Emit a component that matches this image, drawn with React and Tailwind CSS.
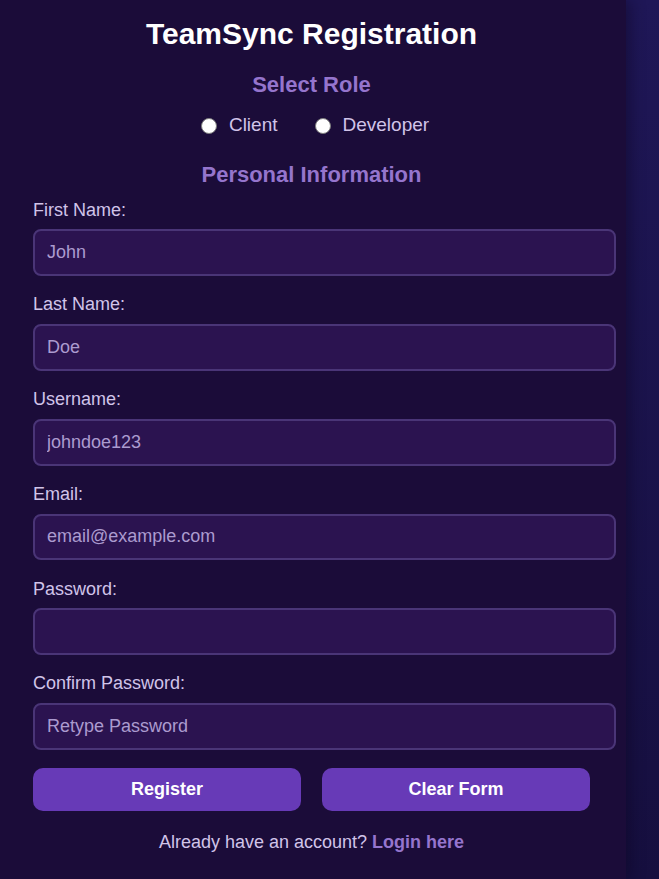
import { useState } from 'react';

const fields = [
  { id: 'firstName', label: 'First Name:', type: 'text', placeholder: 'John' },
  { id: 'lastName', label: 'Last Name:', type: 'text', placeholder: 'Doe' },
  { id: 'username', label: 'Username:', type: 'text', placeholder: 'johndoe123' },
  { id: 'email', label: 'Email:', type: 'email', placeholder: 'email@example.com' },
  { id: 'password', label: 'Password:', type: 'password', placeholder: '' },
  { id: 'confirmPassword', label: 'Confirm Password:', type: 'password', placeholder: 'Retype Password' },
];

const emptyForm = fields.reduce((acc, f) => ({ ...acc, [f.id]: '' }), { role: '' });

export default function App() {
  const [form, setForm] = useState(emptyForm);

  const handleChange = (e) => {
    setForm({ ...form, [e.target.name]: e.target.value });
  };

  const handleSubmit = (e) => {
    e.preventDefault();
  };

  return (
    <div
      className="min-h-screen flex bg-gradient-to-b from-[#1f1757] to-[#160f3f]"
      style={{ fontFamily: '"Liberation Sans", Arial, sans-serif' }}
    >
      <div className="w-[626px] min-h-screen bg-[#1b0c39] pl-[33px] pr-[36px] pt-[16px] shadow-[4px_0_14px_rgba(10,4,30,0.45)]">
        <h1 className="text-center text-[30px] leading-[36px] font-bold text-white">TeamSync Registration</h1>

        <form onSubmit={handleSubmit}>
          {/* Role */}
          <h2 className="mt-[20px] text-center text-[22px] leading-[26px] font-bold text-[#9575cd]">Select Role</h2>
          <div className="mt-[15px] h-[24px] flex justify-center items-center pl-[7px] text-[19px] leading-[24px] text-[#d1c4e9]">
            <label className="flex items-center">
              <input
                type="radio"
                name="role"
                value="client"
                checked={form.role === 'client'}
                onChange={handleChange}
                className="appearance-none w-4 h-4 mt-[2px] rounded-full bg-white border border-[#7d7d7d] checked:border-[5px] checked:border-[#9575cd]"
              />
              <span className="ml-[12px]">Client</span>
            </label>
            <label className="flex items-center ml-[38px]">
              <input
                type="radio"
                name="role"
                value="developer"
                checked={form.role === 'developer'}
                onChange={handleChange}
                className="appearance-none w-4 h-4 mt-[2px] rounded-full bg-white border border-[#7d7d7d] checked:border-[5px] checked:border-[#9575cd]"
              />
              <span className="ml-[11px]">Developer</span>
            </label>
          </div>

          {/* Personal info */}
          <h2 className="mt-[25px] text-center text-[22px] leading-[26px] font-bold text-[#9575cd]">Personal Information</h2>

          <div className="mt-[11.7px]">
            {fields.map((f) => (
              <div key={f.id} className="mb-[18.35px]">
                <label htmlFor={f.id} className="block text-[18px] leading-[20.7px] text-[#d1c4e9]">
                  {f.label}
                </label>
                <input
                  id={f.id}
                  name={f.id}
                  type={f.type}
                  value={form[f.id]}
                  onChange={handleChange}
                  placeholder={f.placeholder}
                  className="block mt-[9px] w-[583px] h-[46.7px] px-[12px] rounded-[8px] border-2 border-[#4a3577] bg-[#2b1350] text-[18px] text-[#d1c4e9] placeholder:text-[#ab9bcf] outline-none"
                />
              </div>
            ))}
          </div>

          <div className="flex justify-between -mt-[0.1px]">
            <button type="submit" className="w-[268px] h-[42.7px] rounded-[10px] bg-[#673ab7] text-white text-[18px] font-bold">
              Register
            </button>
            <button
              type="button"
              onClick={() => setForm(emptyForm)}
              className="w-[268px] h-[42.7px] rounded-[10px] bg-[#673ab7] text-white text-[18px] font-bold"
            >
              Clear Form
            </button>
          </div>
        </form>

        <p className="mt-[21.7px] text-center text-[18px] leading-[20.7px] text-[#d1c4e9]">
          Already have an account? <a href="#" className="font-bold text-[#9575cd]">Login here</a>
        </p>
      </div>
    </div>
  );
}
